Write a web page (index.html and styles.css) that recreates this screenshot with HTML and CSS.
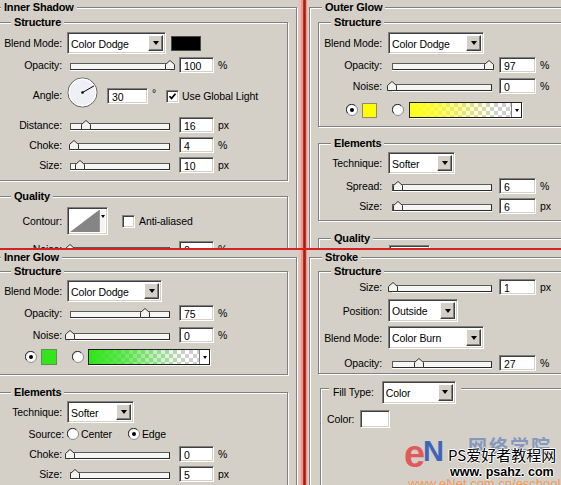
FILE: index.html
```html
<!DOCTYPE html>
<html>
<head>
<meta charset="utf-8">
<link rel="stylesheet" href="styles.css">
</head>
<body>
<div class="sheet">

 <section class="panel tl">
  <div class="grp outer">
   <div class="lg lgo">Inner Shadow</div>
   <div class="grp inner pb7 mt8">
    <div class="lg lgi">Structure</div>
    <div class="row mt3">
     <span class="lbl">Blend Mode:</span>
     <div class="dd w99"><span class="ddt">Color Dodge</span><span class="ddb"></span></div>
     <span class="sw"></span>
    </div>
    <div class="row mt3">
     <span class="lbl">Opacity:</span>
     <div class="sl"><svg class="th" style="left:95px" viewBox="0 0 10 10"><path d="M.5 9.5v-5l4.5-4 4.5 4v5z" fill="#f4f3ef" stroke="#333"/></svg></div>
     <span class="num">100</span><span class="unit">%</span>
    </div>
    <div class="row angle mt4">
     <span class="lbl">Angle:</span>
     <svg class="dial" viewBox="0 0 31 31"><circle cx="15.5" cy="15.5" r="14.5" fill="#eef0f6" stroke="#555"/><circle cx="15.5" cy="15.5" r="13.3" fill="none" stroke="#fff" stroke-width="1.2"/><line x1="15.5" y1="15.5" x2="27" y2="8.9" stroke="#000"/><circle cx="15.5" cy="15.5" r="1.3" fill="#000"/></svg>
     <span class="num wide">30</span><span class="deg">°</span>
     <span class="cb"><svg viewBox="0 0 9 9"><path d="M1.5 4.2l2 2.2 4-4.6" fill="none" stroke="#000" stroke-width="1.7"/></svg></span>
     <span class="cbl">Use Global Light</span>
    </div>
    <div class="row mt9">
     <span class="lbl">Distance:</span>
     <div class="sl"><svg class="th" style="left:11px" viewBox="0 0 10 10"><path d="M.5 9.5v-5l4.5-4 4.5 4v5z" fill="#f4f3ef" stroke="#333"/></svg></div>
     <span class="num">16</span><span class="unit">px</span>
    </div>
    <div class="row mt4">
     <span class="lbl">Choke:</span>
     <div class="sl"><svg class="th" style="left:-1px" viewBox="0 0 10 10"><path d="M.5 9.5v-5l4.5-4 4.5 4v5z" fill="#f4f3ef" stroke="#333"/></svg></div>
     <span class="num">4</span><span class="unit">%</span>
    </div>
    <div class="row mt4">
     <span class="lbl">Size:</span>
     <div class="sl"><svg class="th" style="left:5px" viewBox="0 0 10 10"><path d="M.5 9.5v-5l4.5-4 4.5 4v5z" fill="#f4f3ef" stroke="#333"/></svg></div>
     <span class="num">10</span><span class="unit">px</span>
    </div>
   </div>
   <div class="grp inner mt15 tall">
    <div class="lg lgi">Quality</div>
    <div class="row mt4">
     <span class="lbl">Contour:</span>
     <div class="contour"><svg viewBox="0 0 29 24" preserveAspectRatio="none"><rect width="29" height="24" fill="#fff"/><path d="M0 24L29 0V24Z" fill="#858585"/></svg><span class="cstrip"></span></div>
     <span class="cb off"></span>
     <span class="cbl aa">Anti-aliased</span>
    </div>
    <div class="row mt6">
     <span class="lbl">Noise:</span>
     <div class="sl"><svg class="th" style="left:-5px" viewBox="0 0 10 10"><path d="M.5 9.5v-5l4.5-4 4.5 4v5z" fill="#f4f3ef" stroke="#333"/></svg></div>
     <span class="num">0</span><span class="unit">%</span>
    </div>
   </div>
  </div>
 </section>

 <div class="vsep"></div>

 <section class="panel tr">
  <div class="grp outer">
   <div class="lg lgo">Outer Glow</div>
   <div class="grp inner pb8 mt8">
    <div class="lg lgi">Structure</div>
    <div class="row mt3">
     <span class="lbl">Blend Mode:</span>
     <div class="dd w96"><span class="ddt">Color Dodge</span><span class="ddb"></span></div>
    </div>
    <div class="row mt3">
     <span class="lbl">Opacity:</span>
     <div class="sl"><svg class="th" style="left:92px" viewBox="0 0 10 10"><path d="M.5 9.5v-5l4.5-4 4.5 4v5z" fill="#f4f3ef" stroke="#333"/></svg></div>
     <span class="num">97</span><span class="unit">%</span>
    </div>
    <div class="row mt5">
     <span class="lbl">Noise:</span>
     <div class="sl"><svg class="th" style="left:-5px" viewBox="0 0 10 10"><path d="M.5 9.5v-5l4.5-4 4.5 4v5z" fill="#f4f3ef" stroke="#333"/></svg></div>
     <span class="num">0</span><span class="unit">%</span>
    </div>
    <div class="row colors mt8">
     <svg class="rd" viewBox="0 0 12 12"><circle cx="6" cy="6" r="5.5" fill="#fff" stroke="#8a8a8a"/><path d="M1.8 9.2A4.7 4.7 0 0 1 9.2 1.8" fill="none" stroke="#303030"/><circle cx="6" cy="6" r="2" fill="#000"/></svg>
     <span class="csw yellow"></span>
     <svg class="rd rd2" viewBox="0 0 12 12"><circle cx="6" cy="6" r="5.5" fill="#fff" stroke="#8a8a8a"/><path d="M1.8 9.2A4.7 4.7 0 0 1 9.2 1.8" fill="none" stroke="#303030"/></svg>
     <div class="gb g113"><span class="gf gy"></span><span class="gd"></span></div>
    </div>
   </div>
   <div class="grp inner pb6 mt16">
    <div class="lg lgi">Elements</div>
    <div class="row mt2">
     <span class="lbl">Technique:</span>
     <div class="dd w67"><span class="ddt">Softer</span><span class="ddb"></span></div>
    </div>
    <div class="row mt4">
     <span class="lbl">Spread:</span>
     <div class="sl"><svg class="th" style="left:1px" viewBox="0 0 10 10"><path d="M.5 9.5v-5l4.5-4 4.5 4v5z" fill="#f4f3ef" stroke="#333"/></svg></div>
     <span class="num">6</span><span class="unit">%</span>
    </div>
    <div class="row mt4">
     <span class="lbl">Size:</span>
     <div class="sl"><svg class="th" style="left:1px" viewBox="0 0 10 10"><path d="M.5 9.5v-5l4.5-4 4.5 4v5z" fill="#f4f3ef" stroke="#333"/></svg></div>
     <span class="num">6</span><span class="unit">px</span>
    </div>
   </div>
   <div class="grp inner mt17 tall">
    <div class="lg lgi">Quality</div>
    <div class="row">
     <span class="lbl"></span>
     <div class="contour cr"><svg viewBox="0 0 29 24" preserveAspectRatio="none"><rect width="29" height="24" fill="#fff"/><path d="M0 24L29 0V24Z" fill="#858585"/></svg><span class="cstrip"></span></div>
    </div>
   </div>
  </div>
 </section>

 <div class="hsep"></div>

 <section class="panel bl">
  <div class="grp outer">
   <div class="lg lgo">Inner Glow</div>
   <div class="grp inner pb9 mt7">
    <div class="lg lgi">Structure</div>
    <div class="row mt2">
     <span class="lbl">Blend Mode:</span>
     <div class="dd w95"><span class="ddt">Color Dodge</span><span class="ddb"></span></div>
    </div>
    <div class="row mt3">
     <span class="lbl">Opacity:</span>
     <div class="sl"><svg class="th" style="left:70px" viewBox="0 0 10 10"><path d="M.5 9.5v-5l4.5-4 4.5 4v5z" fill="#f4f3ef" stroke="#333"/></svg></div>
     <span class="num">75</span><span class="unit">%</span>
    </div>
    <div class="row mt6">
     <span class="lbl">Noise:</span>
     <div class="sl"><svg class="th" style="left:-5px" viewBox="0 0 10 10"><path d="M.5 9.5v-5l4.5-4 4.5 4v5z" fill="#f4f3ef" stroke="#333"/></svg></div>
     <span class="num">0</span><span class="unit">%</span>
    </div>
    <div class="row colors mt6">
     <svg class="rd" viewBox="0 0 12 12"><circle cx="6" cy="6" r="5.5" fill="#fff" stroke="#8a8a8a"/><path d="M1.8 9.2A4.7 4.7 0 0 1 9.2 1.8" fill="none" stroke="#303030"/><circle cx="6" cy="6" r="2" fill="#000"/></svg>
     <span class="csw green"></span>
     <svg class="rd rd2" viewBox="0 0 12 12"><circle cx="6" cy="6" r="5.5" fill="#fff" stroke="#8a8a8a"/><path d="M1.8 9.2A4.7 4.7 0 0 1 9.2 1.8" fill="none" stroke="#303030"/></svg>
     <div class="gb g122"><span class="gf gg"></span><span class="gd"></span></div>
    </div>
   </div>
   <div class="grp inner mt17 tall">
    <div class="lg lgi">Elements</div>
    <div class="row mt2">
     <span class="lbl">Technique:</span>
     <div class="dd w67"><span class="ddt">Softer</span><span class="ddb"></span></div>
    </div>
    <div class="row src mt4">
     <span class="lbl lsrc">Source:</span>
     <svg class="rd" viewBox="0 0 12 12"><circle cx="6" cy="6" r="5.5" fill="#fff" stroke="#8a8a8a"/><path d="M1.8 9.2A4.7 4.7 0 0 1 9.2 1.8" fill="none" stroke="#303030"/></svg>
     <span class="rl">Center</span>
     <svg class="rd rdedge" viewBox="0 0 12 12"><circle cx="6" cy="6" r="5.5" fill="#fff" stroke="#8a8a8a"/><path d="M1.8 9.2A4.7 4.7 0 0 1 9.2 1.8" fill="none" stroke="#303030"/><circle cx="6" cy="6" r="2" fill="#000"/></svg>
     <span class="rl">Edge</span>
    </div>
    <div class="row mt5">
     <span class="lbl">Choke:</span>
     <div class="sl"><svg class="th" style="left:-5px" viewBox="0 0 10 10"><path d="M.5 9.5v-5l4.5-4 4.5 4v5z" fill="#f4f3ef" stroke="#333"/></svg></div>
     <span class="num">0</span><span class="unit">%</span>
    </div>
    <div class="row mt4">
     <span class="lbl">Size:</span>
     <div class="sl"><svg class="th" style="left:0px" viewBox="0 0 10 10"><path d="M.5 9.5v-5l4.5-4 4.5 4v5z" fill="#f4f3ef" stroke="#333"/></svg></div>
     <span class="num">5</span><span class="unit">px</span>
    </div>
   </div>
  </div>
 </section>

 <section class="panel br">
  <div class="grp outer">
   <div class="lg lgo">Stroke</div>
   <div class="grp inner pb2 mt7">
    <div class="lg lgi">Structure</div>
    <div class="row mt1">
     <span class="lbl">Size:</span>
     <div class="sl"><svg class="th" style="left:-4px" viewBox="0 0 10 10"><path d="M.5 9.5v-5l4.5-4 4.5 4v5z" fill="#f4f3ef" stroke="#333"/></svg></div>
     <span class="num">1</span><span class="unit">px</span>
    </div>
    <div class="row mt4">
     <span class="lbl">Position:</span>
     <div class="dd w70 h23"><span class="ddt">Outside</span><span class="ddb"></span></div>
    </div>
    <div class="row mt4">
     <span class="lbl">Blend Mode:</span>
     <div class="dd w96 h23"><span class="ddt">Color Burn</span><span class="ddb"></span></div>
    </div>
    <div class="row mt6">
     <span class="lbl">Opacity:</span>
     <div class="sl"><svg class="th" style="left:22px" viewBox="0 0 10 10"><path d="M.5 9.5v-5l4.5-4 4.5 4v5z" fill="#f4f3ef" stroke="#333"/></svg></div>
     <span class="num">27</span><span class="unit">%</span>
    </div>
   </div>
   <div class="grp fill mt14 tall">
    <div class="lgf">
     <span>Fill Type:</span>
     <div class="dd w74 h23"><span class="ddt">Color</span><span class="ddb"></span></div>
    </div>
    <div class="row crow mt6">
     <span>Color:</span>
     <span class="wsw"></span>
    </div>
   </div>
  </div>
  <div class="wm">
   <span class="wm-cn">网络学院</span>
   <span class="wm-e">e</span>
   <span class="wm-n">N</span>
   <span class="wm-ps">PS爱好者教程网</span>
   <span class="wm-url">www. psahz. com</span>
   <span class="wm-enet">www.eNet.com.cn/eschool</span>
  </div>
 </section>

</div>
</body>
</html>
```

FILE: styles.css
```css
* { box-sizing: border-box; }
html, body { margin: 0; padding: 0; }
body {
  width: 561px; height: 485px; overflow: hidden;
  background: #d4d0c8;
  font-family: "Liberation Sans", Arial, sans-serif;
  font-size: 10.5px; color: #000; letter-spacing: -0.1px;
}
.sheet {
  display: grid;
  grid-template-columns: 298px 10px 253px;
  grid-template-rows: 248px 2px 235px;
  width: 561px; height: 485px;
}
.panel { position: relative; overflow: hidden; background: #d4d0c8; }
.tl { grid-area: 1 / 1; --lw: 64px; --slm: 8px; --nw: 35px; --nm: 9px; --ddm: 5px; }
.bl { grid-area: 3 / 1; --lw: 64px; --slm: 8px; --nw: 35px; --nm: 9px; --ddm: 5px; }
.tr { grid-area: 1 / 3; --lw: 63px; --slm: 10px; --nw: 37px; --nm: 7px; --ddm: 6px; }
.br { grid-area: 3 / 3; --lw: 63px; --slm: 10px; --nw: 37px; --nm: 7px; --ddm: 6px; }

.vsep {
  grid-column: 2; grid-row: 1 / 4;
  background: linear-gradient(90deg, #dcc8c0 0 1px, #efbcb4 1px 3px, #e49a92 3px 5px, #bb3322 5px 6px, #a01f10 6px 7px, #bb3322 7px 8px, #e49a92 8px 9px, #efbcb4 9px 10px);
}
.hsep { grid-column: 1 / 4; grid-row: 2; background: #d42222; z-index: 2; }

/* group boxes */
.grp { border: 1px solid #808080; box-shadow: inset 1px 1px 0 #fff, 1px 1px 0 #fff; }
.lg {
  width: max-content; height: 13px; line-height: 13px;
  margin-top: -7px; padding: 0 3px;
  background: #d4d0c8; font-weight: bold; font-size: 11px;
  letter-spacing: -0.2px; white-space: nowrap;
}
.outer { margin-top: 7px; height: 420px; }
.tl .outer, .bl .outer { margin-left: -12px; width: 309px; }
.tr .outer, .br .outer { margin-left: 1px; width: 420px; }
.lgo { margin-left: 12px; }
.inner { margin-left: 8px; }
.tl .inner, .bl .inner { width: 291px; }
.tr .inner, .br .inner { width: 320px; }
.tl .lgi, .bl .lgi { margin-left: 13px; }
.tr .lgi, .br .lgi { margin-left: 12px; }
.tall { height: 200px; }

.mt1 { margin-top: 1px; } .mt2 { margin-top: 2px; } .mt3 { margin-top: 3px; }
.mt4 { margin-top: 4px; } .mt5 { margin-top: 5px; } .mt6 { margin-top: 6px; }
.mt7 { margin-top: 7px; } .mt8 { margin-top: 8px; } .mt9 { margin-top: 9px; }
.mt14 { margin-top: 14px; } .mt15 { margin-top: 15px; } .mt16 { margin-top: 16px; } .mt17 { margin-top: 17px; }
.pb2 { padding-bottom: 2px; } .pb6 { padding-bottom: 6px; } .pb7 { padding-bottom: 7px; }
.pb8 { padding-bottom: 8px; } .pb9 { padding-bottom: 9px; }

/* rows */
.row { display: flex; align-items: center; white-space: nowrap; }
.lbl { flex: none; width: var(--lw); text-align: right; }

/* dropdown */
.dd {
  flex: none; display: flex; height: 22px; margin-left: var(--ddm);
  background: #fff; padding: 2px;
  border: 1px solid; border-color: #808080 #fff #fff #808080;
  box-shadow: inset 1px 1px 0 #404040, inset -1px -1px 0 #d4d0c8;
}
.dd.h23 { height: 23px; }
.w67 { width: 67px; } .w70 { width: 70px; } .w74 { width: 74px; }
.w95 { width: 95px; } .w96 { width: 96px; } .w99 { width: 99px; }
.ddt { flex: 1; align-self: center; padding-left: 1px; padding-top: 1px; overflow: hidden; }
.ddb {
  flex: none; width: 15px; background: #d4d0c8;
  border: 1px solid; border-color: #fff #404040 #404040 #fff;
  box-shadow: inset -1px -1px 0 #808080;
  display: flex; align-items: center; justify-content: center;
}
.ddb::after {
  content: ""; border-style: solid; border-width: 4px 3.5px 0;
  border-color: #000 transparent transparent;
}

/* colour swatch */
.sw { flex: none; width: 30px; height: 15px; margin-left: 5px; background: #000; border: 1px solid #4a4a4a; }

/* number field */
.num {
  display: block; flex: none; width: var(--nw); height: 16px; margin-left: var(--nm);
  background: #fff; padding: 3px 0 0 4px; line-height: 11px;
  border: 1px solid; border-color: #808080 #fff #fff #808080;
  box-shadow: inset 1px 1px 0 #404040, inset -1px -1px 0 #d4d0c8;
}
.unit { margin-left: 4px; }

/* slider */
.sl { position: relative; flex: none; width: 100px; height: 10px; margin-left: var(--slm); }
.sl::before {
  content: ""; position: absolute; left: 0; right: 0; bottom: 0; height: 5px;
  border: 1px solid; border-color: #5a5a5a #2a2a2a #2a2a2a #5a5a5a;
  background: #f6f6f4; box-shadow: 0 1px 0 #fff;
}
.th { position: absolute; bottom: 0; width: 10px; height: 10px; }

/* angle */
.row.angle { align-items: flex-start; }
.angle .lbl { line-height: 16px; margin-top: 10px; }
.dial { flex: none; width: 31px; height: 31px; margin-left: 5px; }
.num.wide { width: 41px; margin-top: 11px; }
.deg { margin-left: 4px; margin-top: 10px; line-height: 12px; }
.cb {
  flex: none; display: flex; align-items: center; justify-content: center;
  width: 13px; height: 13px; background: #fff;
  border: 1px solid; border-color: #808080 #fff #fff #808080;
  box-shadow: inset 1px 1px 0 #404040, inset -1px -1px 0 #d4d0c8;
}
.cb svg { width: 9px; height: 9px; }
.angle .cb { margin-left: 10px; margin-top: 13px; }
.cbl { margin-left: 3px; }
.angle .cbl { margin-top: 11px; line-height: 16px; }

/* contour */
.contour {
  flex: none; display: flex; width: 41px; height: 28px; margin-left: 5px; padding: 2px;
  border: 1px solid; border-color: #808080 #fff #fff #808080;
  box-shadow: inset 1px 1px 0 #404040, inset -1px -1px 0 #d4d0c8; background: #fff;
}
.contour.cr { margin-left: 7px; }
.contour svg { width: 29px; height: 22px; }
.cstrip {
  flex: 1; display: flex; justify-content: center; padding-top: 5px;
  background: #f4f4f4; border-left: 1px solid #9a9a9a;
}
.cstrip::after {
  content: ""; height: 0; border-style: solid; border-width: 3px 2.5px 0;
  border-color: #000 transparent transparent;
}
.cb.off { margin-left: 14px; }
.cbl.aa { margin-left: 4px; }

/* colour rows */
.row.colors { height: 16px; padding-left: 27px; }
.rd { flex: none; width: 12px; height: 12px; }
.csw { flex: none; margin-left: 4px; border: 1px solid #8a8a70; }
.csw.yellow { width: 15px; height: 15px; background: #ffff00; }
.csw.green { width: 16px; height: 16px; background: #33e61c; border-color: #6a8a60; }
.rd2 { margin-left: 15px; }
.gb { flex: none; display: flex; height: 16px; margin-left: 5px; border: 1px solid #1e1e1e; box-shadow: 1px 1px 0 #fff; }
.g113 { width: 113px; }
.g122 { width: 122px; margin-left: 4px; }
.gf { flex: 1; }
.gy {
  background:
    linear-gradient(90deg, #ffff1a 0, rgba(255,255,26,.8) 25%, rgba(255,255,26,.3) 60%, rgba(255,255,26,0) 85%),
    repeating-conic-gradient(#cfcfcf 0 25%, #fff 0 50%) 0 0 / 8px 8px;
}
.gg {
  background:
    linear-gradient(90deg, #2ee41a 0, rgba(46,228,26,.75) 30%, rgba(46,228,26,.3) 62%, rgba(46,228,26,0) 88%),
    repeating-conic-gradient(#cfcfcf 0 25%, #fff 0 50%) 0 0 / 8px 8px;
}
.gd {
  flex: none; width: 10px; background: #fff; border-left: 1px solid #808080;
  display: flex; align-items: center; justify-content: center;
}
.gd::after {
  content: ""; border-style: solid; border-width: 3px 2.5px 0;
  border-color: #000 transparent transparent;
}

/* source row */
.row.src { height: 14px; }
.lsrc { width: 66px; }
.src .rd { margin-left: 3px; }
.src .rdedge { margin-left: 16px; }
.rl { margin-left: 2px; }

/* fill type */
.fill { margin-left: 10px; width: 320px; }
.lgf {
  display: flex; align-items: center; width: max-content; height: 24px;
  margin: -9px 0 0 8px; padding: 0 5px 0 4px; background: #d4d0c8;
}
.lgf .dd { margin-left: 8px; }
.crow { padding-left: 6px; }
.wsw {
  flex: none; width: 30px; height: 18px; margin-left: 6px; background: #fff;
  border: 1px solid; border-color: #808080 #fff #fff #808080;
  box-shadow: inset 1px 1px 0 #404040, inset -1px -1px 0 #d4d0c8;
}

/* watermark */
.wm { position: absolute; left: 0; top: 0; width: 253px; height: 235px; pointer-events: none; }
.wm span { position: absolute; white-space: nowrap; line-height: 1; }
.wm-cn {
  left: 160px; top: 186px; font-family: "Noto Sans CJK SC", sans-serif; font-weight: bold;
  font-size: 19px; letter-spacing: 2px; color: #6a86b8; opacity: .75;
}
.wm-e { left: 96px; top: 185px; font-size: 38px; font-weight: bold; color: #e05a5a; }
.wm-n { left: 115px; top: 187px; font-size: 29px; font-weight: bold; color: #3f66b6; }
.wm-ps {
  left: 140px; top: 197px; font-family: "Noto Sans CJK SC", sans-serif; font-size: 15px;
  color: #000; letter-spacing: 0;
  text-shadow: 1px 0 0 #fff, -1px 0 0 #fff, 0 1px 0 #fff, 0 -1px 0 #fff;
}
.wm-url {
  left: 142px; top: 216px; font-size: 12.5px; font-weight: bold; color: #000; letter-spacing: 0;
  text-shadow: 1px 0 0 #fff, -1px 0 0 #fff, 0 1px 0 #fff, 0 -1px 0 #fff;
}
.wm-enet { left: 100px; top: 227px; font-size: 13px; color: #f29a5c; letter-spacing: 0; }
```
